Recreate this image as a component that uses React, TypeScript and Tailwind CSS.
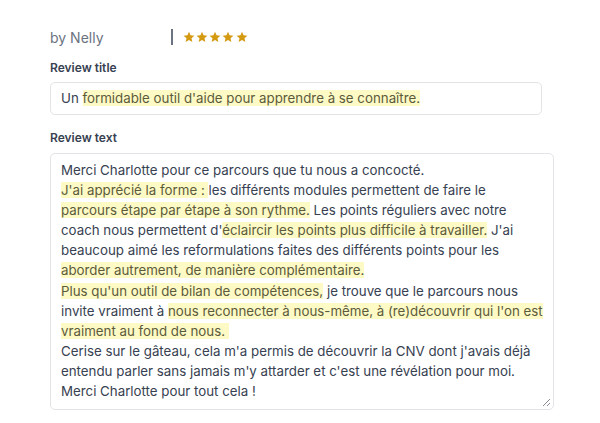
import React from "react";

const H = ({ children }: { children: React.ReactNode }) => (
  <span className="bg-[#fefac5] text-[#5c5a3c]">{children}</span>
);

function Star() {
  return (
    <svg width="12" height="12" viewBox="0 0 24 24" className="fill-[#d49a12]">
      <path d="M12 1.5l3.1 7.1 7.7.7-5.8 5.1 1.7 7.6L12 18.1 5.3 22l1.7-7.6L1.2 9.3l7.7-.7z" />
    </svg>
  );
}

export default function App() {
  return (
    <div
      className="w-[600px] h-[423px] bg-white pl-[50px] pt-[27px] text-[#374151]"
      style={{ fontFamily: "Inter, 'Noto Sans', sans-serif" }}
    >
      <div className="flex items-center h-[20px]">
        <span className="text-[14px] text-[#6b7280] w-[121px]">by Nelly</span>
        <span className="w-[1.5px] h-[16px] bg-[#6b7280]"></span>
        <div className="flex gap-[1.3px] ml-[10px]">
          <Star />
          <Star />
          <Star />
          <Star />
          <Star />
        </div>
      </div>
      <div className="mt-[13px] text-[12px] font-semibold leading-[16px] text-[#374151]">Review title</div>
      <div className="mt-[6px] w-[492px] h-[33px] border border-[#e2e4e8] rounded-[5px] flex items-center pl-[10px] text-[13.3px] text-[#374151]">
        <span>
          Un <H>formidable outil d'aide pour apprendre à se connaître.</H>
        </span>
      </div>
      <div className="mt-[15px] text-[12px] font-semibold leading-[16px] text-[#374151]">Review text</div>
      <div className="relative mt-[7px] w-[504px] h-[257px] border border-[#e2e4e8] rounded-[5px] pl-[10px] pt-[6px] text-[13.3px] leading-[20.1px] text-[#374151] whitespace-nowrap">
        Merci Charlotte pour ce parcours que tu nous a concocté.
        <br />
        <H>J'ai apprécié la forme : </H>les différents modules permettent de faire le
        <br />
        <H>parcours étape par étape à son rythme.</H> Les points réguliers avec notre
        <br />
        coach nous permettent d'<H>éclaircir les points plus difficile à travailler.</H> J'ai
        <br />
        beaucoup aimé les reformulations faites des différents points pour les
        <br />
        <H>aborder autrement, de manière complémentaire.</H>
        <br />
        <H>Plus qu'un outil de bilan de compétences,</H> je trouve que le parcours nous
        <br />
        invite vraiment à <H>nous reconnecter à nous-même, à (re)découvrir qui l'on est</H>
        <br />
        <H>vraiment au fond de nous.&nbsp;</H>
        <br />
        Cerise sur le gâteau, cela m'a permis de découvrir la CNV dont j'avais déjà
        <br />
        entendu parler sans jamais m'y attarder et c'est une révélation pour moi.
        <br />
        Merci Charlotte pour tout cela !
        <svg
          width="9"
          height="9"
          viewBox="0 0 9 9"
          className="absolute right-[2px] bottom-[2px] stroke-[#8a8f98]"
          strokeWidth="1"
        >
          <path d="M8 1L1 8M8 5L5 8" />
        </svg>
      </div>
    </div>
  );
}
